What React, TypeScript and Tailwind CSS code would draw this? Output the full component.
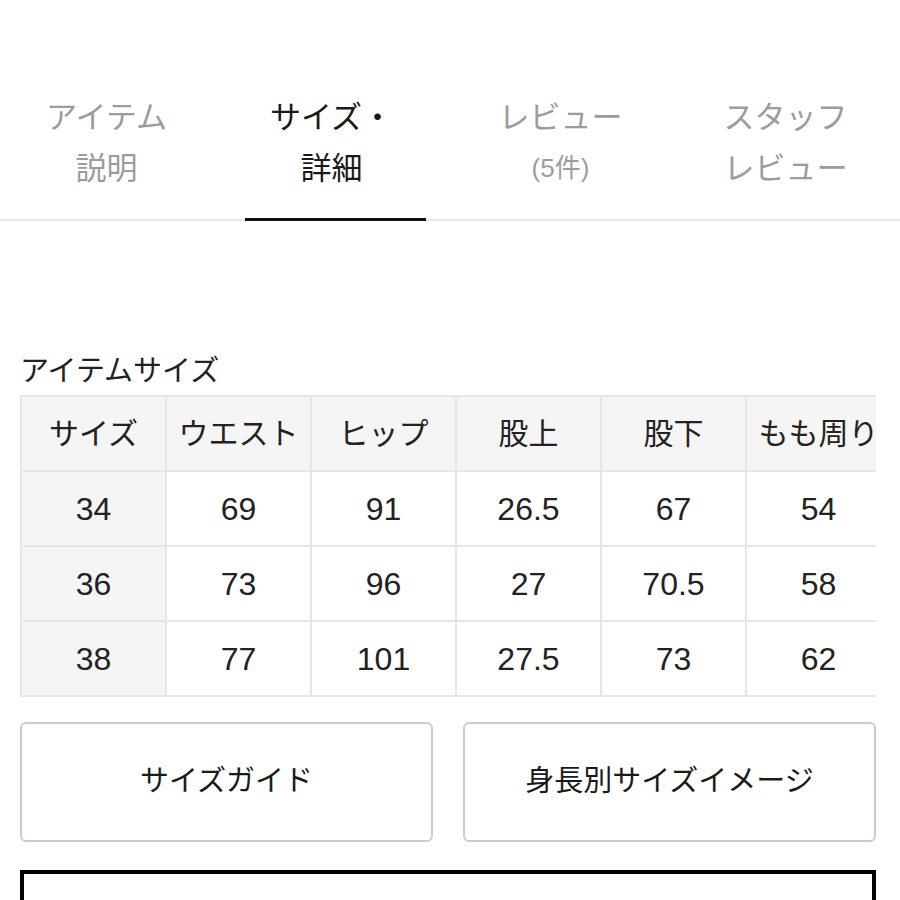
import React from 'react';

const tabs = [
  { lines: ['アイテム', '説明'], active: false },
  { lines: ['サイズ・', '詳細'], active: true },
  { lines: ['レビュー', '(5件)'], active: false },
  { lines: ['スタッフ', 'レビュー'], active: false },
];

const headers = ['サイズ', 'ウエスト', 'ヒップ', '股上', '股下', 'もも周り'];

const rows = [
  ['34', '69', '91', '26.5', '67', '54'],
  ['36', '73', '96', '27', '70.5', '58'],
  ['38', '77', '101', '27.5', '73', '62'],
];

export default function App() {
  return (
    <div className="w-[900px] h-[900px] overflow-hidden bg-white text-[#222] font-['Liberation_Sans','Noto_Sans_CJK_JP',sans-serif]">
      {/* Tabs */}
      <div className="grid grid-cols-4 border-b-2 border-[#e8e8e8]">
        {tabs.map((tab, i) => (
          <div
            key={i}
            className={`relative flex flex-col items-center pt-[92px] pb-[25px] ${i < 2 ? 'pr-3' : 'pr-1'}`}
          >
            {tab.lines.map((line, j) => (
              <span
                key={j}
                className={`leading-[51px] ${tab.active ? 'text-[#1a1a1a]' : 'text-[#9c9c9c]'} ${
                  j === 1 && i === 2 ? 'text-[26px]' : 'text-[31px]'
                }`}
              >
                {line}
              </span>
            ))}
            {tab.active && <div className="absolute left-5 right-6 bottom-[-2px] h-[3px] bg-[#111]" />}
          </div>
        ))}
      </div>

      {/* Item size */}
      <div className="px-5 pt-[130px]">
        <h2 className="text-[29px] leading-[40px] font-normal">アイテムサイズ</h2>
        <div className="mt-[4px] w-[856px] overflow-hidden">
          <table className="table-fixed border-collapse w-[870px]">
            <thead>
              <tr>
                {headers.map((h) => (
                  <th
                    key={h}
                    className="w-[145px] h-[75px] border-2 border-[#e6e6e6] bg-[#f5f5f5] text-[30px] font-normal whitespace-nowrap"
                  >
                    {h}
                  </th>
                ))}
              </tr>
            </thead>
            <tbody>
              {rows.map((row) => (
                <tr key={row[0]}>
                  {row.map((v, k) => (
                    <td
                      key={k}
                      className={`w-[145px] h-[75px] border-2 border-[#e6e6e6] text-center text-[32px] ${
                        k === 0 ? 'bg-[#f5f5f5]' : 'bg-white'
                      }`}
                    >
                      {v}
                    </td>
                  ))}
                </tr>
              ))}
            </tbody>
          </table>
        </div>

        {/* Buttons */}
        <div className="mt-[25px] grid grid-cols-2 gap-[30px] w-[856px]">
          <button className="h-[120px] rounded-md border-2 border-[#cccccc] bg-white text-[29px] text-[#1a1a1a]">
            サイズガイド
          </button>
          <button className="h-[120px] rounded-md border-2 border-[#cccccc] bg-white text-[29px] text-[#1a1a1a]">
            身長別サイズイメージ
          </button>
        </div>

        <div className="mt-[28px] w-[856px] h-[120px] border-4 border-black" />
      </div>
    </div>
  );
}
